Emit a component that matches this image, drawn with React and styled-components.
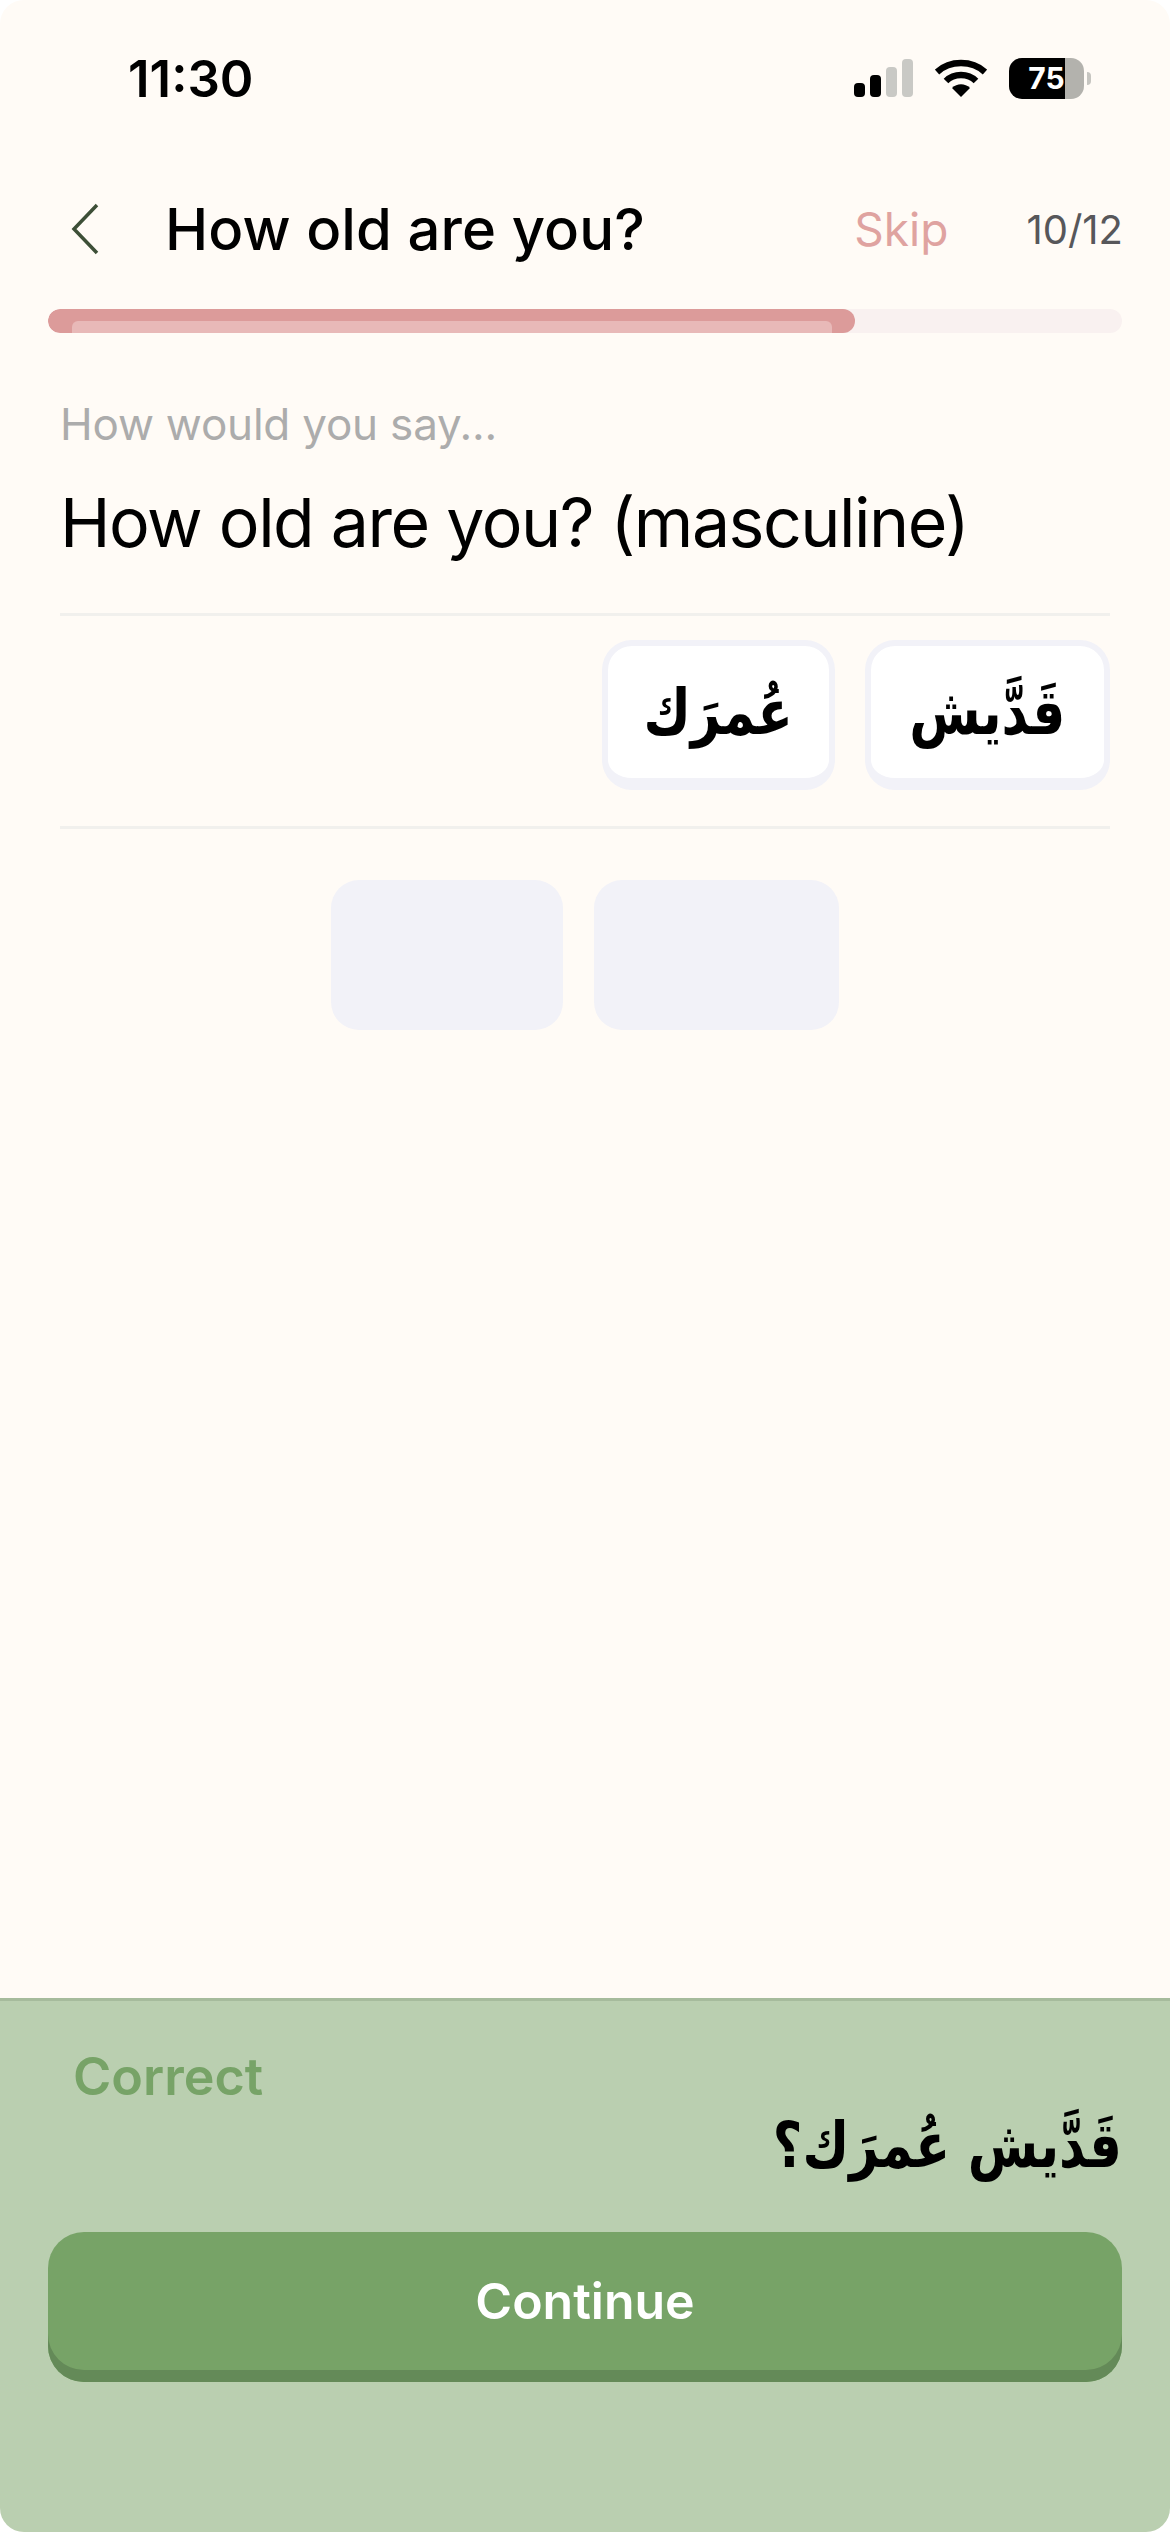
import React from 'react';
import styled, { createGlobalStyle } from 'styled-components';

const GlobalStyle = createGlobalStyle`
  html, body {
    margin: 0;
    padding: 0;
    background: #ffffff;
  }
`;

const Screen = styled.div`
  width: 1170px;
  height: 2532px;
  display: flex;
  flex-direction: column;
  overflow: hidden;
  background: #fffbf6;
  border-radius: 24px;
  font-family: Inter, "Noto Sans", sans-serif;
  color: #000;
`;

const StatusBar = styled.div`
  height: 156px;
  flex: none;
  display: flex;
  align-items: center;
  justify-content: space-between;
  padding: 0 86px 0 128px;
  box-sizing: border-box;
`;

const Time = styled.div`
  font-size: 51px;
  font-weight: 600;
  line-height: 1;
`;

const StatusIcons = styled.div`
  display: flex;
  align-items: center;
  gap: 22px;
`;

const Battery = styled.div`
  position: relative;
  width: 75px;
  height: 41px;
  border-radius: 13px;
  background: linear-gradient(90deg, #000 0, #000 75%, #b3b2ad 75%, #b3b2ad 100%);
  color: #fff;
  font-size: 30px;
  font-weight: 700;
  line-height: 41px;
  text-align: center;

  &::after {
    content: '';
    position: absolute;
    right: -7px;
    top: 14px;
    width: 4px;
    height: 13px;
    border-radius: 0 4px 4px 0;
    background: #c6c5c0;
  }
`;

const Header = styled.div`
  margin-top: 42px;
  height: 62px;
  display: flex;
  align-items: center;
  padding: 0 47px 0 70px;
`;

const Back = styled.svg`
  width: 32px;
  height: 52px;
  flex: none;
  margin-right: 63px;
`;

const Title = styled.div`
  flex: 1;
  font-size: 58px;
  font-weight: 500;
  line-height: 62px;
  letter-spacing: 0.1px;
`;

const Skip = styled.div`
  font-size: 46px;
  color: #dfa3a0;
  margin-right: 78px;
`;

const Count = styled.div`
  font-size: 40px;
  color: #57575a;
`;

const Track = styled.div`
  margin: 49px 48px 0;
  height: 24px;
  border-radius: 12px;
  background: #f9f1f0;
  overflow: hidden;
`;

const Fill = styled.div`
  height: 100%;
  border-radius: 12px;
  background: #dc9b9a;
  padding: 12px 23px 0 24px;
  box-sizing: border-box;
`;

const FillShine = styled.div`
  height: 12px;
  border-radius: 6px 6px 0 0;
  background: #e8b9b8;
`;

const Main = styled.div`
  flex: 1;
  padding: 0 60px;
  display: flex;
  flex-direction: column;
`;

const Prompt = styled.div`
  margin-top: 65px;
  font-size: 44px;
  line-height: 52px;
  letter-spacing: -0.2px;
  color: #acacac;
`;

const Question = styled.div`
  margin-top: 32px;
  font-size: 68px;
  line-height: 80px;
  letter-spacing: -1.5px;
`;

const WordBank = styled.div`
  margin-top: 51px;
  border-top: 3px solid #f1f0ed;
  border-bottom: 3px solid #f1f0ed;
  padding: 24px 0 36px;
  display: flex;
  justify-content: flex-end;
  gap: 30px;
`;

const Chip = styled.div`
  width: ${p => p.$w}px;
  height: 150px;
  box-sizing: border-box;
  border-style: solid;
  border-color: #f2f2f8;
  border-width: 6px 6px 12px;
  border-radius: 30px;
  background: #fff;
  display: flex;
  align-items: center;
  justify-content: center;
`;

// DejaVu's Arabic runs wider than the reference face, so it gets narrowed
const ArabicWord = styled.span`
  display: inline-block;
  font-family: "DejaVu Sans", "Noto Sans", sans-serif;
  font-size: 63px;
  font-weight: 700;
  transform: scaleX(0.82);
`;

const SlotRow = styled.div`
  margin-top: 51px;
  display: flex;
  justify-content: center;
  gap: 31px;
`;

const Slot = styled.div`
  width: ${p => p.$w}px;
  height: 150px;
  border-radius: 28px;
  background: #f2f2f8;
`;

const Panel = styled.div`
  height: 534px;
  flex: none;
  box-sizing: border-box;
  background: #bacfb0;
  border-top: 3px solid #a6bb9c;
  padding: 46px 48px 0;
  display: flex;
  flex-direction: column;
`;

const Verdict = styled.div`
  margin-left: 25px;
  font-size: 52px;
  font-weight: 600;
  line-height: 60px;
  color: #77a367;
`;

const Answer = styled.div`
  direction: rtl;
  margin-top: -6px;
  line-height: 90px;
  transform: scaleX(0.81);
  transform-origin: right center;
  font-family: "DejaVu Sans", "Noto Sans", sans-serif;
  font-size: 63px;
  font-weight: 700;
`;

const Continue = styled.button`
  margin-top: 41px;
  height: 150px;
  border: 0;
  border-radius: 36px;
  background: #77a367;
  box-shadow: inset 0 -12px 0 #648a58;
  color: #fff;
  font-family: Inter, "Noto Sans", sans-serif;
  font-size: 50px;
  font-weight: 600;
  padding: 0 0 12px;
`;

export default function App() {
  return (
    <>
      <GlobalStyle />
      <Screen>
        <StatusBar>
          <Time>11:30</Time>
          <StatusIcons>
            <svg width="59" height="38" viewBox="0 0 59 38">
              <rect x="0" y="24" width="11" height="14" rx="4" fill="#000" />
              <rect x="16" y="16" width="11" height="22" rx="4" fill="#000" />
              <rect x="32" y="8" width="11" height="30" rx="4" fill="#c9c9c5" />
              <rect x="48" y="0" width="11" height="38" rx="4" fill="#c9c9c5" />
            </svg>
            <svg width="52" height="38" viewBox="0 0 52 38">
              <path d="M2 13 C15 1 37 1 50 13" fill="none" stroke="#000" strokeWidth="6.5" />
              <path d="M11 22 C19 14 33 14 41 22" fill="none" stroke="#000" strokeWidth="6.5" />
              <path d="M17 29 C22 24 30 24 35 29 L26 38 Z" fill="#000" />
            </svg>
            <Battery>75</Battery>
          </StatusIcons>
        </StatusBar>
        <Header>
          <Back viewBox="0 0 32 52">
            <path d="M27 2 L4 26 L27 50" fill="none" stroke="#3d4f37" strokeWidth="3.5" />
          </Back>
          <Title>How old are you?</Title>
          <Skip>Skip</Skip>
          <Count>10/12</Count>
        </Header>
        <Track>
          <Fill style={{ width: `${(807 / 1074) * 100}%` }}>
            <FillShine />
          </Fill>
        </Track>
        <Main>
          <Prompt>How would you say...</Prompt>
          <Question>How old are you? (masculine)</Question>
          <WordBank>
            <Chip $w={233}><ArabicWord>عُمرَك</ArabicWord></Chip>
            <Chip $w={245}><ArabicWord>قَدَّيش</ArabicWord></Chip>
          </WordBank>
          <SlotRow>
            <Slot $w={232} />
            <Slot $w={245} />
          </SlotRow>
        </Main>
        <Panel>
          <Verdict>Correct</Verdict>
          <Answer>قَدَّيش عُمرَك؟</Answer>
          <Continue>Continue</Continue>
        </Panel>
      </Screen>
    </>
  );
}
